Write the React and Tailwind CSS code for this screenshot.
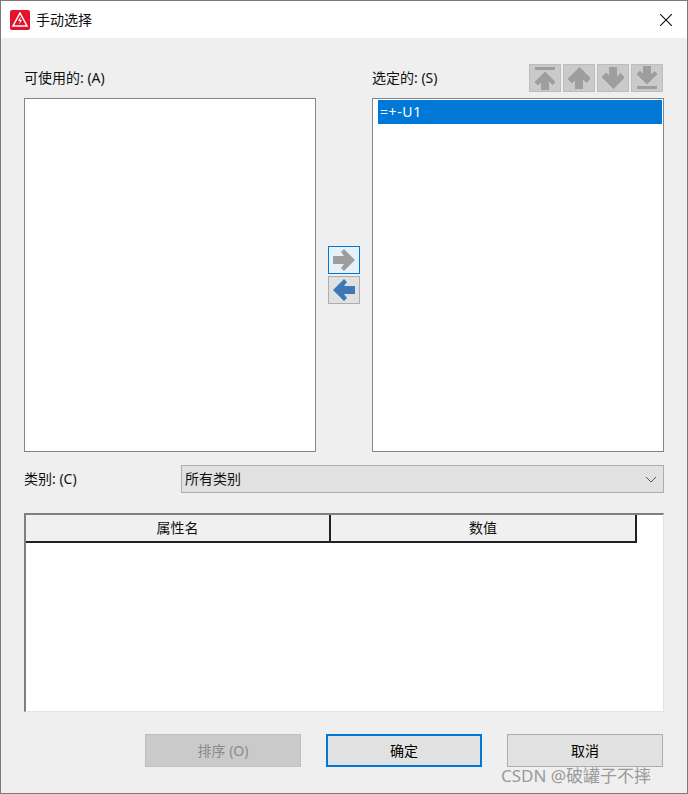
import React from "react";

const arrowUp = "16,3 27,14 27,16 23,19 20,16 20,25 12,25 12,16 9,19 5,16 5,14";
const arrowTopBar = "16,8 26,17 26,19 23,21 20,18 20,26 12,26 12,18 9,21 6,19 6,17";

const MoveButton = ({ bar, flip }) => (
  <div className="w-8 h-7 box-border border border-[#bdbdbd] bg-[#cacaca] overflow-hidden">
    <svg width="30" height="26" viewBox="1 1 30 26" shapeRendering="crispEdges" className={flip ? "block rotate-180" : "block"}>
      {bar && <rect x="6" y="3" width="20" height="3" fill="#9e9e9e" />}
      <polygon points={bar ? arrowTopBar : arrowUp} fill="#9e9e9e" />
    </svg>
  </div>
);

const TransferButton = ({ right }) => (
  <div className={right ? "w-8 h-7 box-border border border-[#0078d7] bg-[#e5f1fb]" : "w-8 h-7 box-border border border-[#adadad] bg-[#e1e1e1]"}>
    <svg width="30" height="26" viewBox="1 1 30 26" className={right ? "block" : "block rotate-180"}>
      <polygon points="27,14 16,25 13,22 16,18 5,18 5,10 16,10 13,6 16,3" fill={right ? "#9e9e9e" : "#3f76b5"} />
    </svg>
  </div>
);

const App = () => {
  return (
    <div className="relative w-[688px] h-[794px] box-border border-l border-t border-r border-b border-[#7a7a7a] bg-[#efefef] text-[14px] leading-5 text-[#111] overflow-hidden [font-family:'Noto_Sans','Noto_Sans_CJK_SC',sans-serif]">
      <div className="h-[37px] bg-white flex items-center pl-[9px] pr-[15px]">
        <svg width="20" height="20" viewBox="0 0 20 20">
          <rect width="20" height="20" rx="2" fill="#e3122d" />
          <path d="M10 3 L17 16 H3 Z" fill="none" stroke="#fff" strokeWidth="1.5" />
          <path d="M10.8 6.5 L8 11 H10 L9 14.5 L12 10 H10.2 Z" fill="#fff" />
        </svg>
        <span className="ml-[6px]">手动选择</span>
        <svg width="12" height="12" viewBox="0 0 12 12" className="ml-auto">
          <path d="M0 0 L12 12 M12 0 L0 12" stroke="#111" strokeWidth="1.1" />
        </svg>
      </div>

      <div className="px-[23px]">
        <div className="mt-[26px] grid grid-cols-[292px_56px_292px] grid-rows-[28px_354px] gap-y-[6px]">
          <div className="flex items-center">可使用的: (A)</div>
          <div />
          <div className="flex items-center justify-between pr-[1px]">
            <span>选定的: (S)</span>
            <div className="flex gap-[2px]">
              <MoveButton bar />
              <MoveButton />
              <MoveButton flip />
              <MoveButton bar flip />
            </div>
          </div>

          <div className="border border-[#82858c] bg-white" />
          <div className="flex flex-col items-center justify-center gap-[2px]">
            <TransferButton right />
            <TransferButton />
          </div>
          <div className="border border-[#82858c] bg-white p-[1px] pl-[5px]">
            <div className="h-6 bg-[#0078d7] text-white flex items-center pl-[2px] tracking-[0.6px]">=+-U1</div>
          </div>
        </div>

        <div className="mt-[13px] h-7 flex items-center">
          <span className="w-[157px]">类别: (C)</span>
          <div className="w-[483px] h-7 box-border border border-[#adadad] bg-[#e1e1e1] flex items-center pl-[3px] pr-[6px]">
            <span>所有类别</span>
            <svg width="12" height="7" viewBox="0 0 12 7" className="ml-auto">
              <path d="M1 1 L6 6 L11 1" fill="none" stroke="#555" strokeWidth="1" />
            </svg>
          </div>
        </div>

        <div className="mt-5 w-[640px] h-[199px] box-border border-t-2 border-l-2 border-t-[#7f7f7f] border-l-[#7f7f7f] border-r border-b border-r-[#e3e3e3] border-b-[#e3e3e3] bg-white">
          <div className="flex w-[611px] h-[28px] box-border border-b-2 border-r-2 border-b-[#222] border-r-[#222] bg-[#f0f0f0]">
            <div className="w-[305px] box-border border-r-2 border-[#222] flex items-center justify-center">属性名</div>
            <div className="flex-1 flex items-center justify-center">数值</div>
          </div>
        </div>

        <div className="mt-[22px] flex justify-end gap-[25px] pr-[1px]">
          <div className="w-[156px] h-[33px] box-border border border-[#bfbfbf] bg-[#cacaca] text-[#8a8a8a] flex items-center justify-center">排序 (O)</div>
          <div className="w-[156px] h-[33px] box-border border-2 border-[#0078d7] bg-[#e1e1e1] text-black flex items-center justify-center">确定</div>
          <div className="w-[156px] h-[33px] box-border border border-[#adadad] bg-[#e1e1e1] text-black flex items-center justify-center">取消</div>
        </div>
      </div>

      <div className="absolute left-[500px] top-[763px] text-[17px] leading-6 text-[#9a9a9a]">CSDN @破罐子不摔</div>
    </div>
  );
};

export default App;
